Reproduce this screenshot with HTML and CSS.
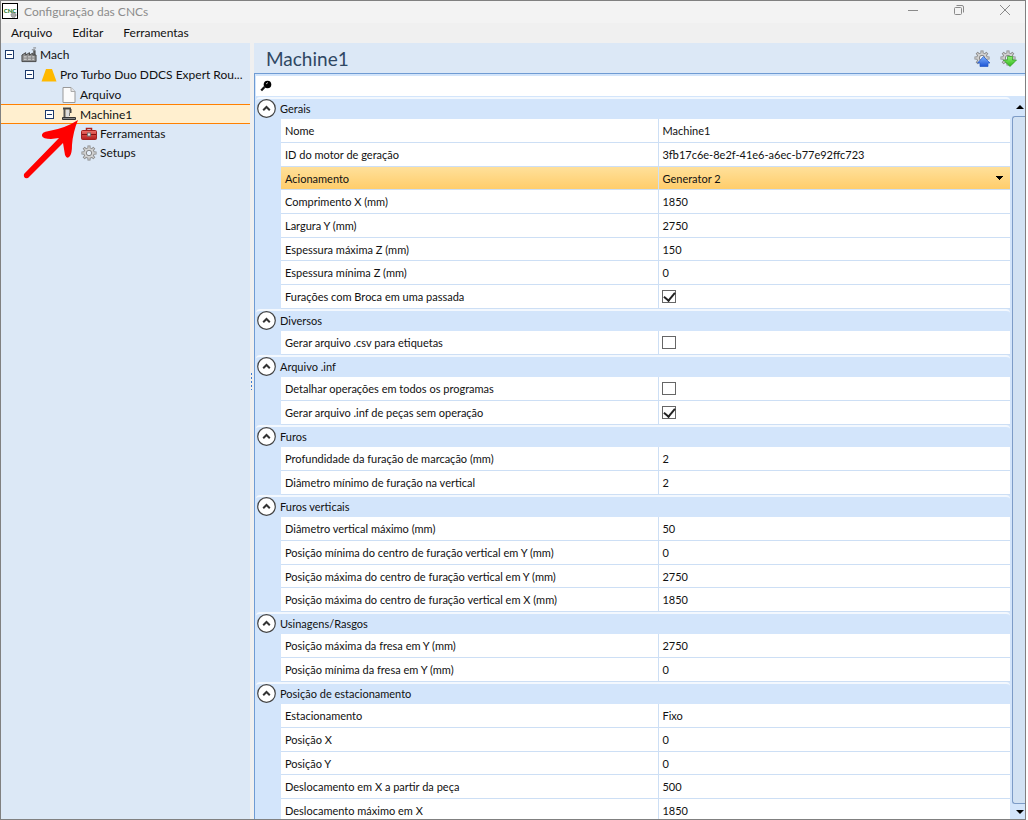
FILE: index.html
```html
<!DOCTYPE html>
<html lang="pt-BR">
<head>
    <meta charset="UTF-8">
    <meta name="viewport" content="width=device-width, initial-scale=1.0">
    <title>Configuração das CNCs</title>
    <link rel="stylesheet" href="styles.css">
</head>
<body>
    <svg class="defs" width="0" height="0" aria-hidden="true">
        <defs>
            <linearGradient id="blueFill" x1="0" y1="0" x2="0" y2="1">
                <stop offset="0" stop-color="#7db0ff"/><stop offset="1" stop-color="#1c54d4"/>
            </linearGradient>
            <linearGradient id="greenFill" x1="0" y1="0" x2="0" y2="1">
                <stop offset="0" stop-color="#8cf070"/><stop offset="1" stop-color="#2fb81c"/>
            </linearGradient>
            <linearGradient id="redFill" x1="0" y1="0" x2="0" y2="1">
                <stop offset="0" stop-color="#ef6f68"/><stop offset="1" stop-color="#b31c1c"/>
            </linearGradient>
            <symbol id="gear" viewBox="0 0 16 16">
                <g stroke="#858585" stroke-width="3">
                    <path d="M8 .5v15M.5 8h15M2.7 2.7l10.6 10.6M13.3 2.7L2.7 13.3"/>
                </g>
                <circle cx="8" cy="8" r="5.6" fill="#858585"/>
                <g stroke="#d0d0d0" stroke-width="1.4">
                    <path d="M8 1.2v13.6M1.2 8h13.6M3.2 3.2l9.6 9.6M12.8 3.2l-9.6 9.6"/>
                </g>
                <circle cx="8" cy="8" r="4.8" fill="#d2d2d2"/>
                <circle cx="8" cy="8" r="2.7" fill="#e4edf8" stroke="#868686"/>
            </symbol>
            <symbol id="chevron" viewBox="0 0 19 19">
                <circle cx="9.5" cy="9.5" r="8.8" fill="#fff" stroke="#444" stroke-width="1.2"/>
                <path d="M6.2 11.2l3.3-3.2 3.3 3.2" fill="none" stroke="#333" stroke-width="2"/>
            </symbol>
        </defs>
    </svg>

    <div class="window">
        <header class="titlebar">
            <svg class="app-icon" width="16" height="16" viewBox="0 0 16 16">
                <rect x=".5" y=".5" width="15" height="15" fill="#fff" stroke="#000"/>
                <circle cx="11.5" cy="12" r="2.5" fill="#aaa" stroke="#777" stroke-dasharray="1 1"/>
                <text x="8" y="10" text-anchor="middle">CNC</text>
            </svg>
            <h1 class="window-title">Configuração das CNCs</h1>
            <div class="window-buttons">
                <button type="button" aria-label="Minimizar"><svg width="12" height="12" viewBox="0 0 12 12"><path d="M1 6.5h10"/></svg></button>
                <button type="button" aria-label="Restaurar"><svg width="12" height="12" viewBox="0 0 12 12"><rect x="1.5" y="3.5" width="7" height="7" rx="1"/><path d="M3.5 1.5H9A1.5 1.5 0 0 1 10.5 3v5.5"/></svg></button>
                <button type="button" aria-label="Fechar"><svg width="12" height="12" viewBox="0 0 12 12"><path d="M1 1l10 10M11 1L1 11"/></svg></button>
            </div>
        </header>

        <nav class="menubar">
            <button type="button">Arquivo</button>
            <button type="button">Editar</button>
            <button type="button">Ferramentas</button>
        </nav>

        <div class="workspace">
            <aside class="sidebar">
                <ul class="tree">
                    <li class="node level-1">
                        <button type="button" class="toggle" aria-label="Recolher Mach"></button>
                        <svg width="16" height="16" viewBox="0 0 17 16">
                            <path d="M13 3h2.500v7H13z" fill="#555"/>
                            <path d="M11.500 2.500H15M13 .5h3" stroke="#777"/>
                            <path d="M1 8l4-2.500V8l4-2.500V8l3.500-2V8h3.500v7H1z" fill="#8d8d8d" stroke="#444"/>
                            <path d="M3 10h3M7.500 10h3M12 10h2M3 12.500h3M7.500 12.500h3M12 12.500h2" stroke="#e2e2e2"/>
                        </svg>
                        <span>Mach</span>
                    </li>
                    <li class="node level-2">
                        <button type="button" class="toggle" aria-label="Recolher Pro Turbo Duo"></button>
                        <svg width="16" height="16" viewBox="0 0 16 16"><path d="M5 2h6l4.500 12.500H.5z" fill="#ffb900"/></svg>
                        <span>Pro Turbo Duo DDCS Expert Rou...</span>
                    </li>
                    <li class="node level-3 leaf">
                        <svg width="16" height="16" viewBox="0 0 16 16">
                            <path d="M2 .5h8l4 4v11H2z" fill="#fbfbfb" stroke="#999"/>
                            <path d="M10 .5v4h4" fill="#e6e6e6" stroke="#aaa"/>
                        </svg>
                        <span>Arquivo</span>
                    </li>
                    <li class="node level-3 selected">
                        <button type="button" class="toggle" aria-label="Recolher Machine1"></button>
                        <svg width="16" height="16" viewBox="0 0 16 16">
                            <path d="M2 2.500h8" stroke="#444" stroke-width="2"/>
                            <path d="M3.500 3v8" stroke="#555" stroke-width="2"/>
                            <path d="M9.500 3v4" stroke="#444" stroke-width="2"/>
                            <path d="M5 4h3v7H5z" fill="#ddd"/>
                            <path d="M8.500 7v3" stroke="#777"/>
                            <path d="M1.500 11.500h13v2h-13z" fill="#888" stroke="#333"/>
                        </svg>
                        <span>Machine1</span>
                    </li>
                    <li class="node level-4 leaf">
                        <svg width="16" height="16" viewBox="0 0 16 16">
                            <path d="M5.500 5V2.500h5V5" fill="none" stroke="#a8201f" stroke-width="1.500"/>
                            <rect x=".5" y="4.500" width="15" height="9" rx="1" fill="url(#redFill)" stroke="#a32020"/>
                            <path d="M1 8.500h14" stroke="#801010"/>
                            <rect x="6.500" y="7" width="3" height="3" fill="#eee" stroke="#777"/>
                        </svg>
                        <span>Ferramentas</span>
                    </li>
                    <li class="node level-4 leaf">
                        <svg width="16" height="16"><use href="#gear"/></svg>
                        <span>Setups</span>
                    </li>
                </ul>
                <!-- destaque sobre o item selecionado -->
                <svg class="pointer" width="58" height="62" viewBox="0 0 58 62">
                    <path d="M56 1Q44 9 27 12Q19 13 20 17Q21 20 29 20L37 19L2 55Q1 60 6 59L41 24L43 36Q45 41 48 37Q50 34 50 26Q51 13 56 1z"/>
                </svg>
            </aside>

            <div class="splitter"><span class="grip"></span></div>

            <main class="panel">
                <header class="panel-header">
                    <h2>Machine1</h2>
                    <div class="panel-actions">
                        <button type="button" aria-label="Exportar configuração">
                            <svg width="17" height="17" viewBox="0 0 17 17"><use href="#gear" width="16" height="16"/><path d="M9.500 6.500l6.500 6.500h-2v3.500H6V13H3.500z" fill="url(#blueFill)" stroke="#2559c4" stroke-width=".7"/></svg>
                        </button>
                        <button type="button" aria-label="Importar configuração">
                            <svg width="17" height="17" viewBox="0 0 17 17"><use href="#gear" width="16" height="16"/><path d="M7.500 6.500h5V10h4L10 16.500 3.500 10h4z" fill="url(#greenFill)" stroke="#2c9c1c" stroke-width=".7"/></svg>
                        </button>
                    </div>
                </header>

                <div class="grid">
                    <label class="search">
                        <svg width="12" height="12" viewBox="0 0 12 12"><circle cx="7.500" cy="4.500" r="3.800"/><path d="M4.500 7L1.200 10.500" stroke="#111" stroke-width="2.200"/><path d="M6 4l2-1.500" stroke="#bbb"/></svg>
                        <input type="text" aria-label="Pesquisar propriedades">
                    </label>

                    <div class="grid-body">
                        <div class="properties">
                            <section class="group">
                                <h3><button type="button"><svg width="19" height="19"><use href="#chevron"/></svg>Gerais</button></h3>
                                <div class="rows">
                                    <div class="row"><label for="nome">Nome</label><input id="nome" type="text" value="Machine1"></div>
                                    <div class="row"><label for="motor">ID do motor de geração</label><input id="motor" type="text" value="3fb17c6e-8e2f-41e6-a6ec-b77e92ffc723"></div>
                                    <div class="row active"><label for="acionamento">Acionamento</label><select id="acionamento"><option>Generator 2</option></select></div>
                                    <div class="row"><label for="compX">Comprimento X (mm)</label><input id="compX" type="text" value="1850"></div>
                                    <div class="row"><label for="largY">Largura Y (mm)</label><input id="largY" type="text" value="2750"></div>
                                    <div class="row"><label for="espMax">Espessura máxima Z (mm)</label><input id="espMax" type="text" value="150"></div>
                                    <div class="row"><label for="espMin">Espessura mínima Z (mm)</label><input id="espMin" type="text" value="0"></div>
                                    <div class="row"><label for="broca">Furações com Broca em uma passada</label><div class="check"><input id="broca" type="checkbox" checked></div></div>
                                </div>
                            </section>

                            <section class="group">
                                <h3><button type="button"><svg width="19" height="19"><use href="#chevron"/></svg>Diversos</button></h3>
                                <div class="rows">
                                    <div class="row"><label for="csv">Gerar arquivo .csv para etiquetas</label><div class="check"><input id="csv" type="checkbox"></div></div>
                                </div>
                            </section>

                            <section class="group">
                                <h3><button type="button"><svg width="19" height="19"><use href="#chevron"/></svg>Arquivo .inf</button></h3>
                                <div class="rows">
                                    <div class="row"><label for="detalhar">Detalhar operações em todos os programas</label><div class="check"><input id="detalhar" type="checkbox"></div></div>
                                    <div class="row"><label for="inf">Gerar arquivo .inf de peças sem operação</label><div class="check"><input id="inf" type="checkbox" checked></div></div>
                                </div>
                            </section>

                            <section class="group">
                                <h3><button type="button"><svg width="19" height="19"><use href="#chevron"/></svg>Furos</button></h3>
                                <div class="rows">
                                    <div class="row"><label for="profMarc">Profundidade da furação de marcação (mm)</label><input id="profMarc" type="text" value="2"></div>
                                    <div class="row"><label for="diamMin">Diâmetro mínimo de furação na vertical</label><input id="diamMin" type="text" value="2"></div>
                                </div>
                            </section>

                            <section class="group">
                                <h3><button type="button"><svg width="19" height="19"><use href="#chevron"/></svg>Furos verticais</button></h3>
                                <div class="rows">
                                    <div class="row"><label for="diamMax">Diâmetro vertical máximo (mm)</label><input id="diamMax" type="text" value="50"></div>
                                    <div class="row"><label for="minY">Posição mínima do centro de furação vertical em Y (mm)</label><input id="minY" type="text" value="0"></div>
                                    <div class="row"><label for="maxY">Posição máxima do centro de furação vertical em Y (mm)</label><input id="maxY" type="text" value="2750"></div>
                                    <div class="row"><label for="maxX">Posição máxima do centro de furação vertical em X (mm)</label><input id="maxX" type="text" value="1850"></div>
                                </div>
                            </section>

                            <section class="group">
                                <h3><button type="button"><svg width="19" height="19"><use href="#chevron"/></svg>Usinagens/Rasgos</button></h3>
                                <div class="rows">
                                    <div class="row"><label for="fresaMax">Posição máxima da fresa em Y (mm)</label><input id="fresaMax" type="text" value="2750"></div>
                                    <div class="row"><label for="fresaMin">Posição mínima da fresa em Y (mm)</label><input id="fresaMin" type="text" value="0"></div>
                                </div>
                            </section>

                            <section class="group">
                                <h3><button type="button"><svg width="19" height="19"><use href="#chevron"/></svg>Posição de estacionamento</button></h3>
                                <div class="rows">
                                    <div class="row"><label for="estac">Estacionamento</label><input id="estac" type="text" value="Fixo"></div>
                                    <div class="row"><label for="posX">Posição X</label><input id="posX" type="text" value="0"></div>
                                    <div class="row"><label for="posY">Posição Y</label><input id="posY" type="text" value="0"></div>
                                    <div class="row"><label for="deslX">Deslocamento em X a partir da peça</label><input id="deslX" type="text" value="500"></div>
                                    <div class="row"><label for="deslMax">Deslocamento máximo em X</label><input id="deslMax" type="text" value="1850"></div>
                                </div>
                            </section>
                        </div>

                        <div class="scrollbar">
                            <button type="button" class="scroll-up" aria-label="Rolar para cima"></button>
                            <div class="thumb"></div>
                            <button type="button" class="scroll-down" aria-label="Rolar para baixo"></button>
                        </div>
                    </div>
                </div>
            </main>
        </div>
    </div>
</body>
</html>
```

FILE: styles.css
```css
* {
    margin: 0;
    padding: 0;
    box-sizing: border-box;
}

body {
    background-color: #fff;
    font-family: Lato, 'Open Sans', sans-serif;
    font-size: 12px;
    color: #111;
}

button, input, select {
    font: inherit;
    color: inherit;
    border: none;
    background: none;
    border-radius: 0;
    outline: none;
}

ul {
    list-style: none;
}

.defs {
    position: absolute;
}

.window {
    display: flex;
    flex-direction: column;
    height: 100vh;
    margin-right: 2px;
    border: 1px solid #808080;
    background-color: #f0f0f0;
    overflow: hidden;
}

/* barra de título */
.titlebar {
    display: flex;
    align-items: center;
    flex: none;
    height: 22px;
    padding: 0 0 2px 1px;
    background-color: #f3f3f3;
}

.app-icon text {
    font-size: 6px;
    font-weight: 900;
    fill: #1b7a2c;
}

.window-title {
    flex: 1;
    margin-left: 6px;
    font-size: 12px;
    font-weight: 400;
    color: #8c8c8c;
}

.window-buttons {
    display: flex;
    gap: 6px;
    height: 100%;
}

.window-buttons button {
    display: flex;
    align-items: center;
    justify-content: center;
    width: 40px;
    padding-bottom: 2px;
}

.window-buttons svg {
    fill: none;
    stroke: #8a8a8a;
}

/* menu */
.menubar {
    display: flex;
    flex: none;
    gap: 20px;
    height: 20px;
    padding: 0 0 2px 10px;
}

.workspace {
    display: flex;
    flex: 1;
    min-height: 0;
}

/* árvore */
.sidebar {
    position: relative;
    flex: 0 0 249px;
    min-width: 0;
    overflow: hidden;
    background-color: #dce8f6;
}

.tree {
    padding-top: 2px;
}

.node {
    display: flex;
    align-items: center;
    height: 19px;
    gap: 3px;
    white-space: nowrap;
}

.node svg {
    flex: none;
}

.level-1 {
    padding-left: 4px;
}

.level-2 {
    height: 21px;
    padding-left: 24px;
}

.level-3 {
    padding-left: 44px;
}

.level-3.leaf {
    padding-left: 60px;
}

.level-4.leaf {
    padding-left: 80px;
}

.selected {
    height: 20px;
    background-color: #ffefcf;
    border-top: 1px solid #ff8000;
    border-bottom: 1px solid #ff8000;
}

.toggle {
    flex: none;
    width: 9px;
    height: 9px;
    margin-right: 4px;
    border: 1px solid #1d3a6c;
    background: linear-gradient(#1d3a6c, #1d3a6c) center / 5px 1px no-repeat #fff;
}

.pointer {
    position: absolute;
    left: 21px;
    top: 76px;
    fill: #ff0000;
}

.splitter {
    display: flex;
    align-items: center;
    flex: 0 0 4px;
    background-color: #f0f0f0;
}

.grip {
    width: 3px;
    height: 18px;
    margin-bottom: 100px;
    background: radial-gradient(#3b7ad0 1px, transparent 1px) 0 0 / 3px 4px;
}

/* painel */
.panel {
    display: flex;
    flex-direction: column;
    flex: 1;
    min-width: 0;
}

.panel-header {
    display: flex;
    align-items: center;
    justify-content: space-between;
    flex: none;
    height: 30px;
    padding: 0 8px 0 12px;
    background-color: #dce8f6;
}

.panel-header h2 {
    font-size: 19px;
    font-weight: 400;
    color: #2f4763;
}

.panel-actions {
    display: flex;
    gap: 9px;
}

.panel-actions button {
    height: 17px;
}

.grid {
    display: flex;
    flex-direction: column;
    flex: 1;
    min-height: 0;
    border-top: 1px solid #6f9bd3;
    border-left: 1px solid #6f9bd3;
    background-color: #d3e5fb;
}

.search {
    display: flex;
    align-items: center;
    flex: none;
    height: 20px;
    margin: 2px 0 1px 1px;
    padding-left: 4px;
    background-color: #fff;
}

.search input {
    flex: 1;
}

.grid-body {
    display: flex;
    flex: 1;
    min-height: 0;
}

.properties {
    flex: 1;
    min-width: 0;
    padding: 0 2px 0 1px;
    overflow: hidden;
}

.group h3 {
    height: 22px;
    border-top: 2px solid #f3f8fe;
    border-top-left-radius: 4px;
    border-top-right-radius: 4px;
    background-color: #d3e5fb;
    font-size: 11px;
    font-weight: 400;
}

.group h3 button {
    display: flex;
    align-items: center;
    gap: 4px;
    height: 19px;
    padding-left: 1px;
}

.rows {
    padding-left: 25px;
    font-size: 11px;
}

.row {
    display: grid;
    grid-template-columns: minmax(0, 379fr) minmax(0, 351fr);
    height: 24px;
    border-bottom: 1px solid #cddff5;
    background-color: #fff;
}

.row:nth-child(3n) {
    height: 23px;
}

.row label {
    display: flex;
    align-items: center;
    padding-left: 4px;
    border-right: 1px solid #cddff5;
    white-space: nowrap;
}

.row input[type="text"],
.row select {
    width: 100%;
    padding-left: 3px;
}

.row select {
    appearance: none;
    background: linear-gradient(to bottom right, #000 50%, transparent 50%) right 6px center / 4px 4px no-repeat,
                linear-gradient(to bottom left, #000 50%, transparent 50%) right 10px center / 4px 4px no-repeat;
}

.row.active {
    background: linear-gradient(#ffe09a, #ffcd6b);
}

.check {
    display: flex;
    align-items: center;
    padding-left: 3px;
}

.check input {
    width: 14px;
    height: 13px;
    appearance: none;
    border: 1px solid #666;
    background-color: #fff;
}

.check input:checked {
    display: flex;
    align-items: center;
    justify-content: center;
}

.check input:checked::before {
    content: "";
    width: 5px;
    height: 9px;
    margin-bottom: 3px;
    border: solid #222;
    border-width: 0 2px 2px 0;
    transform: rotate(40deg);
}

/* barra de rolagem */
.scrollbar {
    display: flex;
    flex-direction: column;
    flex: 0 0 13px;
    background-color: #d3e5fb;
}

.scrollbar button {
    display: flex;
    align-items: center;
    justify-content: center;
    height: 19px;
    padding-left: 2px;
}

.scrollbar .scroll-down {
    height: 15px;
}

.scroll-up::before,
.scroll-down::before {
    content: "";
    border: 4px solid transparent;
    border-top-width: 0;
    border-bottom: 4px solid #000;
}

.scroll-down::before {
    transform: rotate(180deg);
}

.thumb {
    flex: 1;
    border: 1px solid #7d9cc7;
    border-right: none;
    border-radius: 3px 0 0 3px;
    background-color: #d2e2f3;
}
```
